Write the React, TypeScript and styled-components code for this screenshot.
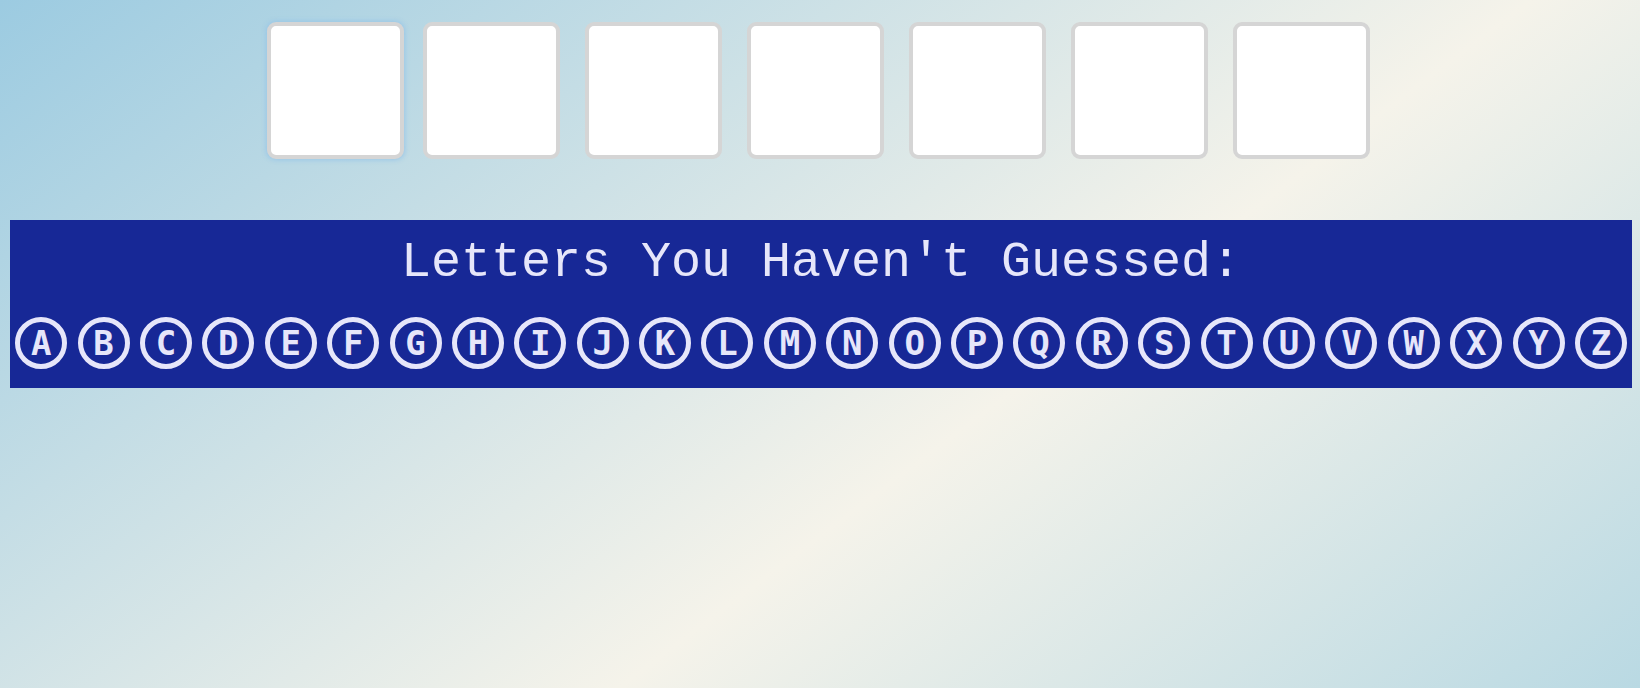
import React from "react";
import styled, { createGlobalStyle } from "styled-components";

const GlobalStyle = createGlobalStyle`
  html, body {
    margin: 0;
    padding: 0;
    height: 100%;
  }
  body {
    min-height: 100vh;
    background: linear-gradient(143deg, #9ccbe1 0%, #f5f3ea 60%, #b9d9e3 100%);
    font-family: "Liberation Sans", Arial, sans-serif;
  }
`;

const Page = styled.div`
  padding: 22px 8px 0 10px;
`;

const BoxRow = styled.div`
  display: flex;
  justify-content: center;
  gap: 25px;
  padding-right: 5px;
`;

const LetterBox = styled.div<{ $focused?: boolean }>`
  box-sizing: border-box;
  width: 137px;
  height: 137px;
  background: #ffffff;
  border: 4px solid #d5d5d5;
  border-radius: 9px;
  box-shadow: ${(p) => (p.$focused ? "0 0 5px 1px rgba(150, 196, 232, 0.9)" : "none")};
  margin-right: ${(p) => (p.$focused ? "-6px" : "0")};
`;

const Panel = styled.section`
  margin-top: 61px;
  background: #172896;
  padding: 14px 0 19px;
`;

const Title = styled.h2`
  margin: 0 0 26px;
  font-family: "Liberation Mono", "Courier New", monospace;
  font-weight: normal;
  font-size: 50px;
  line-height: 57px;
  color: lavender;
  text-align: center;
`;

const LetterRow = styled.div`
  display: flex;
`;

const Cell = styled.div`
  flex: 1 1 0;
  display: flex;
  justify-content: center;
`;

const Ring = styled.span`
  box-sizing: border-box;
  width: 52px;
  height: 52px;
  border: 5px solid lavender;
  border-radius: 50%;
  display: flex;
  align-items: center;
  justify-content: center;
  color: lavender;
  font-family: "DejaVu Sans Mono", monospace;
  font-weight: bold;
  font-size: 34px;
  line-height: 1;
`;

const LETTERS = "ABCDEFGHIJKLMNOPQRSTUVWXYZ".split("");

export default function App() {
  return (
    <>
      <GlobalStyle />
      <Page>
        <BoxRow>
          {Array.from({ length: 7 }).map((_, i) => (
            <LetterBox key={i} $focused={i === 0} />
          ))}
        </BoxRow>
        <Panel>
          <Title>Letters You Haven't Guessed:</Title>
          <LetterRow>
            {LETTERS.map((l) => (
              <Cell key={l}>
                <Ring>{l}</Ring>
              </Cell>
            ))}
          </LetterRow>
        </Panel>
      </Page>
    </>
  );
}
